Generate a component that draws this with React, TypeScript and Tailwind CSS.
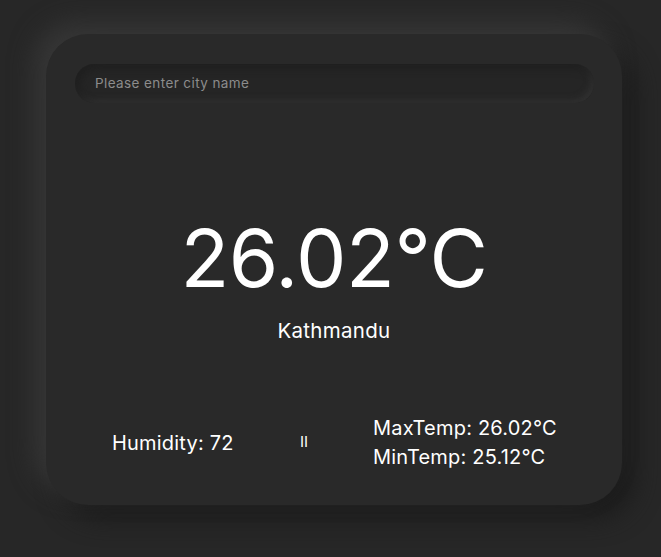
import React from "react";

export default function App() {
  return (
    <div className="min-h-[557px] w-full bg-[#272727] pt-[34px] pl-[46px]" style={{ fontFamily: "Inter, 'Open Sans', sans-serif" }}>
      <div className="w-[576px] h-[471px] rounded-[42px] bg-[#292929] shadow-[-12px_-12px_24px_#363636,14px_14px_24px_#1c1c1c] px-[29px] pt-[30px] flex flex-col">
        <div className="h-[39px] w-[519px] rounded-full bg-[#252525] shadow-[inset_4px_4px_8px_#1f1f1f,inset_-3px_-3px_6px_#323232] flex items-center pl-[20px]">
          <span className="text-[13.5px] text-[#8c8c8c] tracking-[0.4px]">Please enter city name</span>
        </div>
        <div className="flex flex-col items-center mt-[115px]">
          <div className="text-[80px] leading-none text-white font-normal tracking-[-0.4px]">26.02°C</div>
          <div className="mt-[23px] text-[20.5px] text-white leading-none tracking-[0.3px]">Kathmandu</div>
        </div>
        <div className="flex items-center mt-[72px]">
          <div className="ml-[37px] w-[188px] text-[20px] text-white tracking-[0.2px]">Humidity: 72</div>
          <div className="w-[73px] text-[15px] text-white">II</div>
          <div className="flex flex-col text-[20px] text-white leading-[29px] tracking-[0.2px]">
            <span>MaxTemp: 26.02°C</span>
            <span>MinTemp: 25.12°C</span>
          </div>
        </div>
      </div>
    </div>
  );
}
